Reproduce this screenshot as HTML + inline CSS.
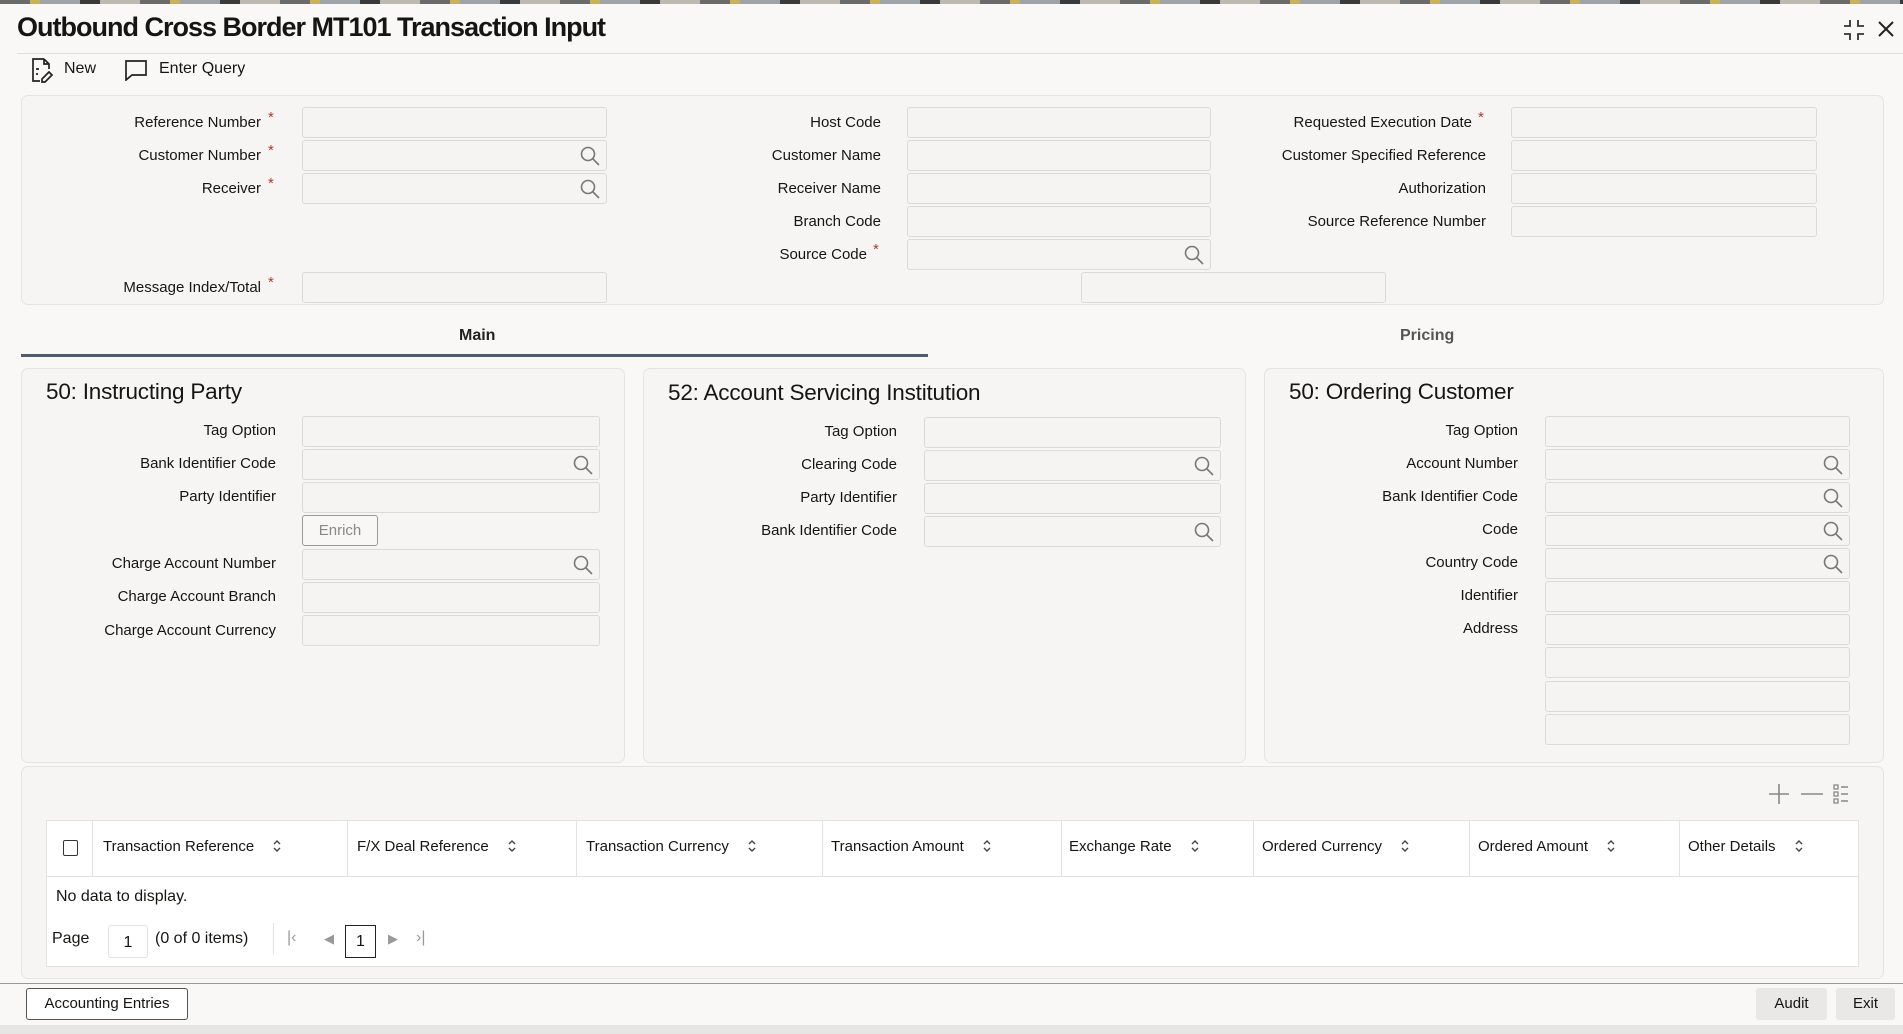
<!DOCTYPE html>
<html><head><meta charset="utf-8"><style>
*{box-sizing:border-box;margin:0;padding:0}
body{width:1903px;height:1034px;position:relative;background:#f9f8f6;font-family:"Liberation Sans",sans-serif;color:#161513;overflow:hidden}
.a{position:absolute}
.strip{left:0;top:0;width:1903px;height:4px;background:repeating-linear-gradient(90deg,#6b6b6b 0 30px,#c9b25a 30px 40px,#9ea3a8 40px 80px,#3a3a3a 80px 100px,#bdb9b0 100px 140px)}
.title{left:17px;top:12px;font-size:27px;font-weight:bold;letter-spacing:-1px}
.panel{background:#f6f5f3;border:1px solid #e6e4e0;border-radius:7px}
.lbl{font-size:15px;text-align:right;white-space:nowrap;width:300px;line-height:18px}
.inp{height:31px;background:#f5f4f2;border:1px solid #dcdad6;border-radius:3px}
.star{color:#b03b2e;font-size:15px}
.h{font-size:22.5px;letter-spacing:-0.2px}
.th{font-size:15px;white-space:nowrap}
.th svg{vertical-align:-3px;margin-left:18px}
.mag{position:absolute;right:6px;top:5px}
.btn{border:1px solid #555;border-radius:3px;background:#fff;font-size:15px;text-align:center;white-space:nowrap}
</style></head><body>
<svg width="0" height="0" style="position:absolute"><defs><symbol id="s" viewBox="0 0 10 16"><path d="M2 6l3-3 3 3M2 10l3 3 3-3" fill="none" stroke="#444" stroke-width="1.4"/></symbol></defs></svg>
<div class="a strip"></div>
<div class="a title">Outbound Cross Border MT101 Transaction Input</div>
<svg class="a" style="left:1842px;top:18px" width="24" height="24" viewBox="0 0 24 24" fill="none" stroke="#333" stroke-width="1.8"><path d="M8 2v6H2M16 2v6h6M8 22v-6H2M16 22v-6h6"/></svg>
<svg class="a" style="left:1876px;top:19px" width="20" height="20" viewBox="0 0 20 20" stroke="#222" stroke-width="2"><path d="M3 3l14 14M17 3L3 17"/></svg>
<div class="a" style="left:17px;top:53px;width:1886px;height:1px;background:#e2e0dc"></div>
<svg class="a" style="left:30px;top:57px" width="24" height="26" viewBox="0 0 24 26" fill="none" stroke="#222" stroke-width="1.7"><path d="M14 2H3v22h7M14 2l5 5v5M14 2v5h5M6 12h3M6 17h2M12 22l7-7 3 3-7 7h-3z"/></svg>
<div class="a" style="left:64px;top:60px;font-size:16px">New</div>
<svg class="a" style="left:124px;top:59px" width="24" height="22" viewBox="0 0 24 22" fill="none" stroke="#222" stroke-width="1.7"><path d="M2 2h20v14H8l-6 5z"/></svg>
<div class="a" style="left:159px;top:60px;font-size:16px">Enter Query</div>

<div class="a panel" style="left:21px;top:95px;width:1863px;height:210px"></div>
<div class="a lbl" style="left:-39px;top:114px">Reference Number</div><div class="a star" style="left:268px;top:109px">*</div>
<div class="a inp" style="left:302px;top:107px;width:305px"></div>
<div class="a lbl" style="left:-39px;top:147px">Customer Number</div><div class="a star" style="left:268px;top:142px">*</div>
<div class="a inp" style="left:302px;top:140px;width:305px"><svg class="mag" width="20" height="20" viewBox="0 0 20 20" fill="none" stroke="#777" stroke-width="1.6"><circle cx="8" cy="8" r="6.5"/><path d="M13 13l6 6"/></svg></div>
<div class="a lbl" style="left:-39px;top:180px">Receiver</div><div class="a star" style="left:268px;top:175px">*</div>
<div class="a inp" style="left:302px;top:173px;width:305px"><svg class="mag" width="20" height="20" viewBox="0 0 20 20" fill="none" stroke="#777" stroke-width="1.6"><circle cx="8" cy="8" r="6.5"/><path d="M13 13l6 6"/></svg></div>
<div class="a lbl" style="left:-39px;top:279px">Message Index/Total</div><div class="a star" style="left:268px;top:274px">*</div>
<div class="a inp" style="left:302px;top:272px;width:305px"></div>
<div class="a lbl" style="left:581px;top:114px">Host Code</div><div class="a inp" style="left:907px;top:107px;width:304px"></div>
<div class="a lbl" style="left:581px;top:147px">Customer Name</div><div class="a inp" style="left:907px;top:140px;width:304px"></div>
<div class="a lbl" style="left:581px;top:180px">Receiver Name</div><div class="a inp" style="left:907px;top:173px;width:304px"></div>
<div class="a lbl" style="left:581px;top:213px">Branch Code</div><div class="a inp" style="left:907px;top:206px;width:304px"></div>
<div class="a lbl" style="left:567px;top:246px">Source Code</div><div class="a star" style="left:873px;top:241px">*</div>
<div class="a inp" style="left:907px;top:239px;width:304px"><svg class="mag" width="20" height="20" viewBox="0 0 20 20" fill="none" stroke="#777" stroke-width="1.6"><circle cx="8" cy="8" r="6.5"/><path d="M13 13l6 6"/></svg></div>
<div class="a inp" style="left:1081px;top:272px;width:305px"></div>
<div class="a lbl" style="left:1172px;top:114px">Requested Execution Date</div><div class="a star" style="left:1478px;top:109px">*</div>
<div class="a inp" style="left:1511px;top:107px;width:306px"></div>
<div class="a lbl" style="left:1186px;top:147px">Customer Specified Reference</div><div class="a inp" style="left:1511px;top:140px;width:306px"></div>
<div class="a lbl" style="left:1186px;top:180px">Authorization</div><div class="a inp" style="left:1511px;top:173px;width:306px"></div>
<div class="a lbl" style="left:1186px;top:213px">Source Reference Number</div><div class="a inp" style="left:1511px;top:206px;width:306px"></div>

<div class="a" style="left:459px;top:327px;font-size:16px;font-weight:bold;color:#222">Main</div>
<div class="a" style="left:1400px;top:327px;font-size:16px;font-weight:bold;color:#555">Pricing</div>
<div class="a" style="left:21px;top:354px;width:907px;height:3px;background:#4f5b6e"></div>

<div class="a panel" style="left:21px;top:368px;width:604px;height:395px"></div>
<div class="a h" style="left:46px;top:379px">50: Instructing Party</div>
<div class="a lbl" style="left:-24px;top:422px">Tag Option</div><div class="a inp" style="left:302px;top:416px;width:298px"></div>
<div class="a lbl" style="left:-24px;top:455px">Bank Identifier Code</div><div class="a inp" style="left:302px;top:449px;width:298px"><svg class="mag" width="20" height="20" viewBox="0 0 20 20" fill="none" stroke="#777" stroke-width="1.6"><circle cx="8" cy="8" r="6.5"/><path d="M13 13l6 6"/></svg></div>
<div class="a lbl" style="left:-24px;top:488px">Party Identifier</div><div class="a inp" style="left:302px;top:482px;width:298px"></div>
<div class="a" style="left:302px;top:515px;width:76px;height:31px;border:1px solid #999;border-radius:3px;background:#f8f7f5;color:#888;font-size:15px;text-align:center;line-height:29px">Enrich</div>
<div class="a lbl" style="left:-24px;top:555px">Charge Account Number</div><div class="a inp" style="left:302px;top:549px;width:298px"><svg class="mag" width="20" height="20" viewBox="0 0 20 20" fill="none" stroke="#777" stroke-width="1.6"><circle cx="8" cy="8" r="6.5"/><path d="M13 13l6 6"/></svg></div>
<div class="a lbl" style="left:-24px;top:588px">Charge Account Branch</div><div class="a inp" style="left:302px;top:582px;width:298px"></div>
<div class="a lbl" style="left:-24px;top:622px">Charge Account Currency</div><div class="a inp" style="left:302px;top:615px;width:298px"></div>

<div class="a panel" style="left:643px;top:368px;width:603px;height:395px"></div>
<div class="a h" style="left:668px;top:380px">52: Account Servicing Institution</div>
<div class="a lbl" style="left:597px;top:423px">Tag Option</div><div class="a inp" style="left:924px;top:417px;width:297px"></div>
<div class="a lbl" style="left:597px;top:456px">Clearing Code</div><div class="a inp" style="left:924px;top:450px;width:297px"><svg class="mag" width="20" height="20" viewBox="0 0 20 20" fill="none" stroke="#777" stroke-width="1.6"><circle cx="8" cy="8" r="6.5"/><path d="M13 13l6 6"/></svg></div>
<div class="a lbl" style="left:597px;top:489px">Party Identifier</div><div class="a inp" style="left:924px;top:483px;width:297px"></div>
<div class="a lbl" style="left:597px;top:522px">Bank Identifier Code</div><div class="a inp" style="left:924px;top:516px;width:297px"><svg class="mag" width="20" height="20" viewBox="0 0 20 20" fill="none" stroke="#777" stroke-width="1.6"><circle cx="8" cy="8" r="6.5"/><path d="M13 13l6 6"/></svg></div>

<div class="a panel" style="left:1264px;top:368px;width:620px;height:395px"></div>
<div class="a h" style="left:1289px;top:379px">50: Ordering Customer</div>
<div class="a lbl" style="left:1218px;top:422px">Tag Option</div><div class="a inp" style="left:1545px;top:416px;width:305px"></div>
<div class="a lbl" style="left:1218px;top:455px">Account Number</div><div class="a inp" style="left:1545px;top:449px;width:305px"><svg class="mag" width="20" height="20" viewBox="0 0 20 20" fill="none" stroke="#777" stroke-width="1.6"><circle cx="8" cy="8" r="6.5"/><path d="M13 13l6 6"/></svg></div>
<div class="a lbl" style="left:1218px;top:488px">Bank Identifier Code</div><div class="a inp" style="left:1545px;top:482px;width:305px"><svg class="mag" width="20" height="20" viewBox="0 0 20 20" fill="none" stroke="#777" stroke-width="1.6"><circle cx="8" cy="8" r="6.5"/><path d="M13 13l6 6"/></svg></div>
<div class="a lbl" style="left:1218px;top:521px">Code</div><div class="a inp" style="left:1545px;top:515px;width:305px"><svg class="mag" width="20" height="20" viewBox="0 0 20 20" fill="none" stroke="#777" stroke-width="1.6"><circle cx="8" cy="8" r="6.5"/><path d="M13 13l6 6"/></svg></div>
<div class="a lbl" style="left:1218px;top:554px">Country Code</div><div class="a inp" style="left:1545px;top:548px;width:305px"><svg class="mag" width="20" height="20" viewBox="0 0 20 20" fill="none" stroke="#777" stroke-width="1.6"><circle cx="8" cy="8" r="6.5"/><path d="M13 13l6 6"/></svg></div>
<div class="a lbl" style="left:1218px;top:587px">Identifier</div><div class="a inp" style="left:1545px;top:581px;width:305px"></div>
<div class="a lbl" style="left:1218px;top:620px">Address</div><div class="a inp" style="left:1545px;top:614px;width:305px"></div>
<div class="a inp" style="left:1545px;top:647px;width:305px"></div>
<div class="a inp" style="left:1545px;top:681px;width:305px"></div>
<div class="a inp" style="left:1545px;top:714px;width:305px"></div>

<div class="a panel" style="left:21px;top:766px;width:1863px;height:213px"></div>
<svg class="a" style="left:1768px;top:782px" width="80" height="24" viewBox="0 0 80 24" fill="none" stroke="#888" stroke-width="1.6"><path d="M11 2v20M1 12h20M33 12h22"/><path d="M66 3h4v4h-4zM66 10h4v4h-4zM66 17h4v4h-4z" stroke-width="1.3"/><path d="M73 5h7M73 12h7M73 19h7"/></svg>
<div class="a" style="left:46px;top:820px;width:1813px;height:147px;background:#fff;border:1px solid #e4e2de"></div>
<div class="a" style="left:46px;top:876px;width:1813px;height:1px;background:#e4e2de"></div>
<div class="a" style="left:63px;top:840px;width:15px;height:16px;border:1.5px solid #333;border-radius:2px"></div>
<div class="a" style="left:92px;top:820px;width:1px;height:56px;background:#e4e2de"></div>
<div class="a" style="left:347px;top:820px;width:1px;height:56px;background:#e4e2de"></div>
<div class="a" style="left:576px;top:820px;width:1px;height:56px;background:#e4e2de"></div>
<div class="a" style="left:822px;top:820px;width:1px;height:56px;background:#e4e2de"></div>
<div class="a" style="left:1061px;top:820px;width:1px;height:56px;background:#e4e2de"></div>
<div class="a" style="left:1253px;top:820px;width:1px;height:56px;background:#e4e2de"></div>
<div class="a" style="left:1469px;top:820px;width:1px;height:56px;background:#e4e2de"></div>
<div class="a" style="left:1679px;top:820px;width:1px;height:56px;background:#e4e2de"></div>
<div class="a th" style="left:103px;top:838px">Transaction Reference<svg width="10" height="16"><use href="#s"/></svg></div>
<div class="a th" style="left:357px;top:838px">F/X Deal Reference<svg width="10" height="16"><use href="#s"/></svg></div>
<div class="a th" style="left:586px;top:838px">Transaction Currency<svg width="10" height="16"><use href="#s"/></svg></div>
<div class="a th" style="left:831px;top:838px">Transaction Amount<svg width="10" height="16"><use href="#s"/></svg></div>
<div class="a th" style="left:1069px;top:838px">Exchange Rate<svg width="10" height="16"><use href="#s"/></svg></div>
<div class="a th" style="left:1262px;top:838px">Ordered Currency<svg width="10" height="16"><use href="#s"/></svg></div>
<div class="a th" style="left:1478px;top:838px">Ordered Amount<svg width="10" height="16"><use href="#s"/></svg></div>
<div class="a th" style="left:1688px;top:838px">Other Details<svg width="10" height="16"><use href="#s"/></svg></div>
<div class="a" style="left:56px;top:888px;font-size:16px">No data to display.</div>
<div class="a" style="left:52px;top:930px;font-size:16px">Page</div>
<div class="a" style="left:108px;top:925px;width:40px;height:33px;border:1px solid #e4e2de;border-radius:3px;font-size:16px;text-align:center;line-height:33px">1</div>
<div class="a" style="left:155px;top:930px;font-size:16px">(0 of 0 items)</div>
<div class="a" style="left:273px;top:923px;width:1px;height:32px;background:#e4e2de"></div>
<div class="a" style="left:287px;top:929px;font-size:16px;color:#999">|&#8249;</div>
<div class="a" style="left:324px;top:931px;font-size:13px;color:#999">&#9664;</div>
<div class="a" style="left:345px;top:925px;width:31px;height:33px;border:1.5px solid #222;font-size:16px;text-align:center;line-height:31px">1</div>
<div class="a" style="left:388px;top:931px;font-size:13px;color:#999">&#9654;</div>
<div class="a" style="left:416px;top:929px;font-size:16px;color:#999">&#8250;|</div>

<div class="a" style="left:0;top:983px;width:1903px;height:1px;background:#999"></div>
<div class="a btn" style="left:26px;top:988px;width:162px;height:32px;line-height:30px">Accounting Entries</div>
<div class="a" style="left:1756px;top:988px;width:71px;height:32px;background:#e9e8e6;border-radius:3px;font-size:15px;text-align:center;line-height:32px">Audit</div>
<div class="a" style="left:1836px;top:988px;width:59px;height:32px;background:#e9e8e6;border-radius:3px;font-size:15px;text-align:center;line-height:32px">Exit</div>
<div class="a" style="left:0;top:1025px;width:1903px;height:9px;background:#e6e5e3"></div>
</body></html>
